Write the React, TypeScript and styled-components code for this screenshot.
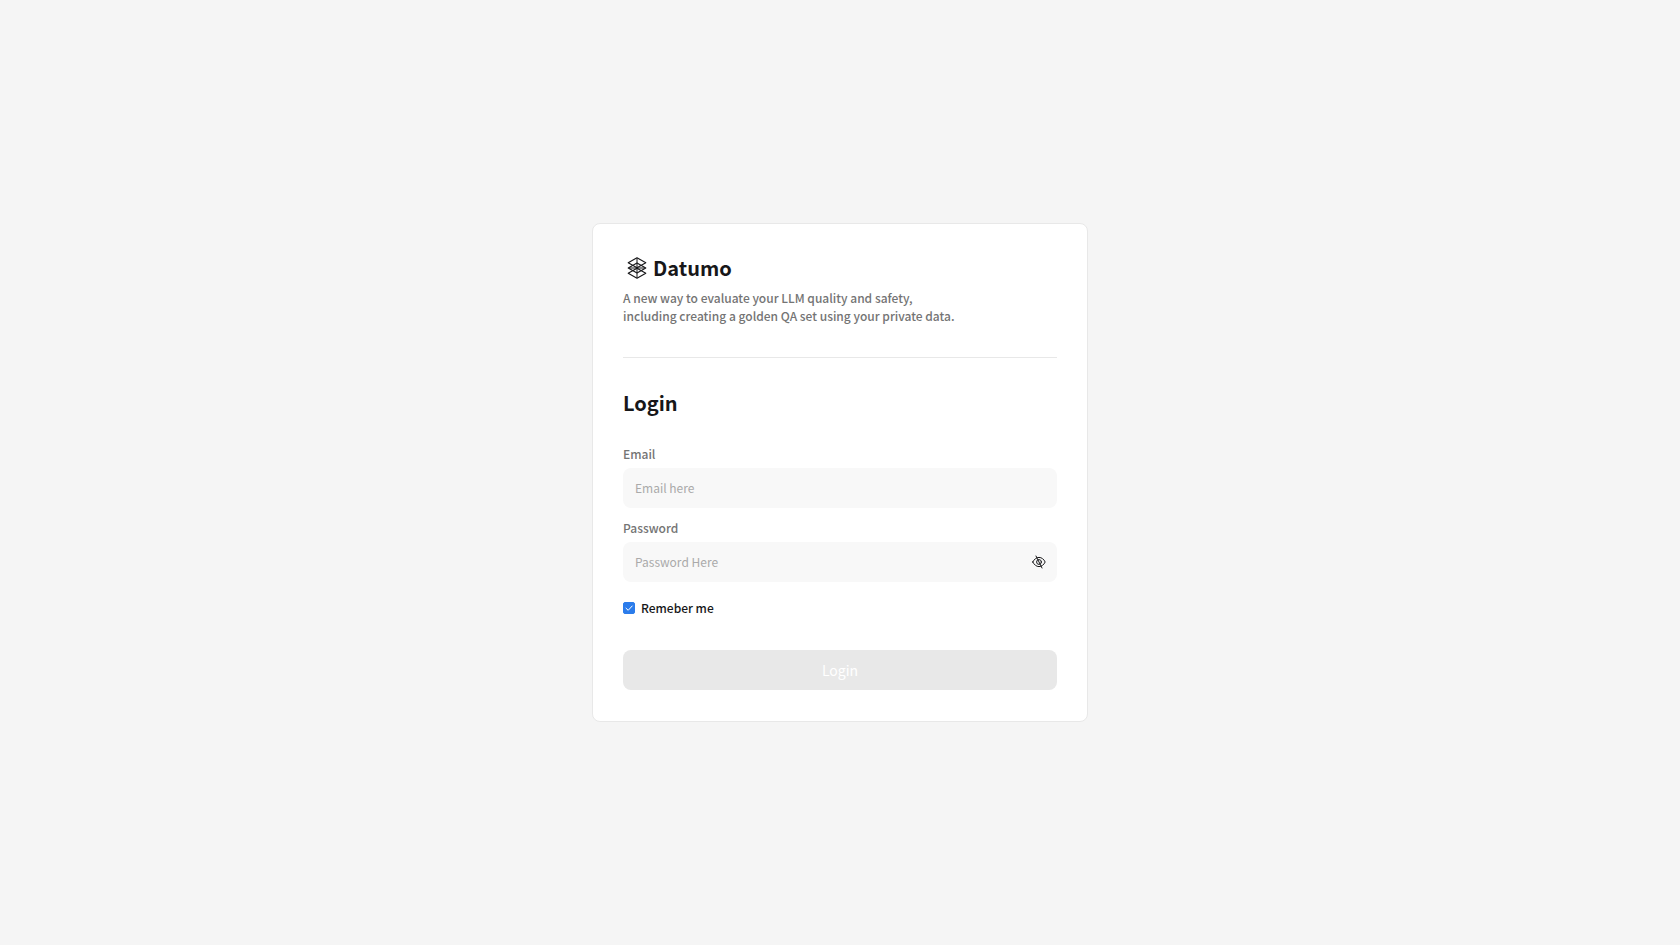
import { useState } from "react";
import styled, { createGlobalStyle } from "styled-components";

const GlobalStyle = createGlobalStyle`
  *, *::before, *::after { box-sizing: border-box; }
  body {
    margin: 0;
    background: #f5f5f5;
    color: #171719;
    font-family: "Noto Sans CJK KR", "Noto Sans", sans-serif;
    font-size: 12px;
    line-height: 18px;
  }
  button, input { font: inherit; }
`;

const Page = styled.main`
  min-height: 100vh;
  display: flex;
  align-items: center;
  justify-content: center;
`;

const Card = styled.section`
  width: 100%;
  max-width: 496px;
  padding: 31px 30px;
  background: #ffffff;
  border: 1px solid #e8e8e8;
  border-radius: 8px;
`;

const Intro = styled.header`
  display: flex;
  flex-direction: column;
  gap: 8px;
  padding-bottom: 32px;
  border-bottom: 1px solid #e8e8e8;
`;

const Brand = styled.div`
  display: flex;
  align-items: center;
  gap: 6px;
  padding-left: 4px;
`;

const BrandName = styled.span`
  font-size: 20px;
  line-height: 26px;
  font-weight: 700;
`;

const Description = styled.p`
  margin: 0;
  color: #747474;
  font-weight: 500;
`;

const Title = styled.h1`
  margin: 30px 0 27px;
  font-size: 20px;
  line-height: 30px;
  font-weight: 700;
`;

const Form = styled.form`
  display: flex;
  flex-direction: column;
`;

const Fields = styled.div`
  display: flex;
  flex-direction: column;
  gap: 11px;
`;

const Field = styled.div`
  display: flex;
  flex-direction: column;
  gap: 5px;
`;

const Label = styled.label`
  color: #747474;
  font-weight: 500;
`;

const InputBox = styled.div`
  display: flex;
  align-items: center;
  height: 40px;
  padding: 0 11px 0 12px;
  background: #f8f8f8;
  border-radius: 8px;
`;

const Input = styled.input`
  flex: 1;
  min-width: 0;
  padding: 0;
  border: 0;
  outline: 0;
  background: transparent;
  color: #171719;
  &::placeholder { color: #aaaaaa; opacity: 1; }
`;

const IconButton = styled.button`
  display: flex;
  padding: 0;
  border: 0;
  background: none;
  color: #171719;
  cursor: pointer;
`;

const Remember = styled.label`
  display: flex;
  align-items: center;
  align-self: flex-start;
  gap: 6px;
  margin: 17px 0 33px;
  font-weight: 500;
`;

const Tick = styled.span`
  display: grid;
  width: 12px;
  height: 12px;
  > * { grid-area: 1 / 1; }
  svg { pointer-events: none; }
`;

const Checkbox = styled.input`
  appearance: none;
  width: 12px;
  height: 12px;
  margin: 0;
  border: 1px solid #b0b0b0;
  border-radius: 2px;
  &:checked { background: #2b7ceb; border-color: #2b7ceb; }
  &:not(:checked) + svg { visibility: hidden; }
`;

const Submit = styled.button`
  height: 40px;
  border: 0;
  border-radius: 8px;
  background: #e8e8e8;
  color: #ffffff;
  font-size: 14px;
`;

function Logo() {
  return (
    <svg width="20" height="22" viewBox="0 0 20 22" fill="none" stroke="#171719" strokeWidth="1.1" strokeLinejoin="round" aria-hidden="true">
      <path d="M10 .8 18.8 5.8 10 10.8 1.2 5.8Z" />
      <path d="M10 6 18.8 11 10 16 1.2 11Z" />
      <path d="M10 11.2 18.8 16.2 10 21.2 1.2 16.2Z" />
      <path d="M10 1v20M2 11h16" strokeWidth="1" />
    </svg>
  );
}

function EyeOff() {
  return (
    <svg width="14" height="14" viewBox="0 0 14 14" fill="none" stroke="currentColor" strokeLinecap="round" aria-hidden="true">
      <path d="M.8 7C2.2 4.2 4.4 2.4 7 2.4S11.8 4.2 13.2 7C11.8 9.8 9.6 11.6 7 11.6S2.2 9.8.8 7Z" />
      <circle cx="7" cy="7" r="2.4" />
      <path d="M4 1 10 13" />
    </svg>
  );
}

export default function App() {
  const [visible, setVisible] = useState(false);
  return (
    <Page>
      <GlobalStyle />
      <Card>
        <Intro>
          <Brand>
            <Logo />
            <BrandName>Datumo</BrandName>
          </Brand>
          <Description>
            A new way to evaluate your LLM quality and safety,
            <br />
            including creating a golden QA set using your private data.
          </Description>
        </Intro>
        <Title>Login</Title>
        <Form onSubmit={(e) => e.preventDefault()}>
          <Fields>
            <Field>
              <Label htmlFor="email">Email</Label>
              <InputBox>
                <Input id="email" type="email" placeholder="Email here" />
              </InputBox>
            </Field>
            <Field>
              <Label htmlFor="password">Password</Label>
              <InputBox>
                <Input id="password" type={visible ? "text" : "password"} placeholder="Password Here" />
                <IconButton type="button" aria-label="Show password" aria-pressed={visible} onClick={() => setVisible(!visible)}>
                  <EyeOff />
                </IconButton>
              </InputBox>
            </Field>
          </Fields>
          <Remember>
            <Tick>
              <Checkbox type="checkbox" defaultChecked />
              <svg width="12" height="12" viewBox="0 0 12 12" fill="none" stroke="#fff" strokeLinecap="round" strokeLinejoin="round" aria-hidden="true">
                <path d="M3 6.2 5.2 8.3 9.2 4" />
              </svg>
            </Tick>
            Remeber me
          </Remember>
          <Submit type="submit" disabled>Login</Submit>
        </Form>
      </Card>
    </Page>
  );
}
